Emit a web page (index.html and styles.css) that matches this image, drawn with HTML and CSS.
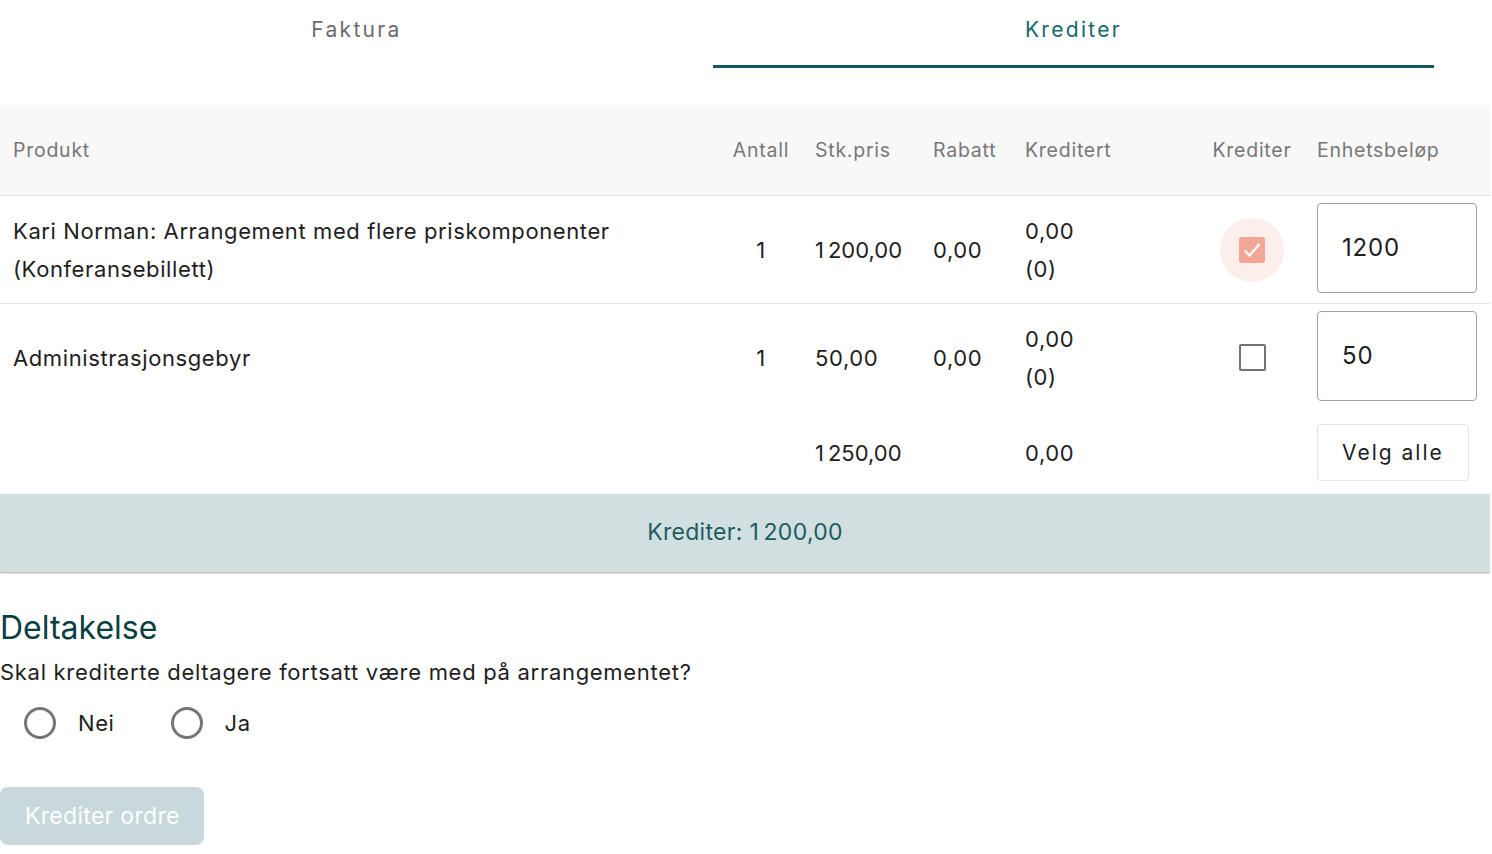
FILE: index.html
```html
<!DOCTYPE html>
<html lang="no">
<head>
<meta charset="utf-8">
<title>Krediter</title>
<link rel="stylesheet" href="styles.css">
</head>
<body>
<div class="tabs">
  <div class="tab tab-first">Faktura</div>
  <div class="tab active">Krediter</div>
</div>

<div class="table">
  <div class="row head">
    <div class="c c-prod">Produkt</div>
    <div class="c c-center">Antall</div>
    <div class="c">Stk.pris</div>
    <div class="c">Rabatt</div>
    <div class="c">Kreditert</div>
    <div class="c c-center">Krediter</div>
    <div class="c">Enhetsbeløp</div>
  </div>
  <div class="row item">
    <div class="c c-prod">Kari Norman: Arrangement med flere priskomponenter (Konferansebillett)</div>
    <div class="c c-center">1</div>
    <div class="c">1&#8239;200,00</div>
    <div class="c">0,00</div>
    <div class="c">0,00<br>(0)</div>
    <div class="c c-center">
      <span class="check-wrap on">
        <span class="box checked">
          <svg class="tick" viewBox="0 0 26 26" width="26" height="26"><path d="M5.5 13.5l5 5L20.5 7" fill="none" stroke="#fff" stroke-width="2.4"/></svg>
        </span>
      </span>
    </div>
    <div class="c"><div class="input">1200</div></div>
  </div>
  <div class="row item last">
    <div class="c c-prod">Administrasjonsgebyr</div>
    <div class="c c-center">1</div>
    <div class="c">50,00</div>
    <div class="c">0,00</div>
    <div class="c">0,00<br>(0)</div>
    <div class="c c-center">
      <span class="check-wrap"><span class="box"></span></span>
    </div>
    <div class="c"><div class="input">50</div></div>
  </div>
  <div class="row total">
    <div class="c c-prod"></div>
    <div class="c c-center"></div>
    <div class="c">1&#8239;250,00</div>
    <div class="c"></div>
    <div class="c">0,00</div>
    <div class="c c-center"></div>
    <div class="c"><button class="select-all">Velg alle</button></div>
  </div>
</div>

<div class="summary">Krediter: 1&#8239;200,00</div>

<section class="participation">
  <h2>Deltakelse</h2>
  <p class="question">Skal krediterte deltagere fortsatt være med på arrangementet?</p>
  <div class="radios">
    <label class="radio"><span class="circle"></span>Nei</label>
    <label class="radio"><span class="circle"></span>Ja</label>
  </div>
  <button class="submit" disabled>Krediter ordre</button>
</section>
</body>
</html>
```

FILE: styles.css
```css
* { box-sizing: border-box; }
html, body { margin: 0; padding: 0; background: #fff; }
body {
  font-family: Inter, "Noto Sans", sans-serif;
  color: #1e1e1e;
  width: 1490px;
  letter-spacing: 0.6px;
}

.tabs {
  display: flex;
  width: 1434px;
  height: 68px;
}
.tab {
  flex: 1;
  text-align: center;
  font-size: 21px;
  letter-spacing: 2.3px;
  color: #6b6b6b;
  padding-top: 17px;
  border-bottom: 3px solid transparent;
}
.tab-first { flex: 0 0 713px; }
.tab.active {
  color: #17686c;
  border-bottom-color: #13585e;
}

.table { margin-top: 37px; }
.row {
  display: grid;
  grid-template-columns: 720px 82px 118px 92px 188px 104px 186px;
  align-items: center;
}
.row.head {
  height: 91px;
  background: #f8f8f8;
  border-bottom: 1px solid #e2e2e2;
  color: #777;
  font-size: 19.5px;
  letter-spacing: 0.75px;
}
.row.item {
  height: 108px;
  border-bottom: 1px solid #e2e2e2;
  font-size: 22px;
  line-height: 38px;
}
.row.item.last { height: 107px; border-bottom: none; }
.row.total {
  height: 83px;
  font-size: 22px;
}
.c { padding-left: 13px; }
.c-prod { padding-right: 90px; }
.c-center { padding-left: 0; text-align: center; display: flex; justify-content: center; align-items: center; }

.check-wrap {
  width: 64px; height: 64px;
  border-radius: 50%;
  display: flex; align-items: center; justify-content: center;
}
.check-wrap.on { background: #fbeeeb; }
.box {
  width: 27px; height: 27px;
  border: 2.5px solid #737373;
  border-radius: 2px;
  display: flex; align-items: center; justify-content: center;
}
.box.checked {
  width: 26px; height: 26px;
  background: #f1a696;
  border: none;
  border-radius: 3px;
}
.tick { display: block; flex: 0 0 26px; }

.input {
  width: 160px;
  height: 90px;
  margin-top: -3px;
  border: 1px solid #a0a0a0;
  border-radius: 4px;
  font-size: 24px;
  padding-left: 24px;
  display: flex;
  align-items: center;
  letter-spacing: 0.8px;
}

.select-all {
  width: 152px;
  height: 57px;
  background: #fff;
  border: 1px solid #e3e3e3;
  border-radius: 4px;
  font-family: inherit;
  font-size: 21px;
  letter-spacing: 2px;
  color: #1e1e1e;
  text-align: left;
  padding-left: 24px;
}

.summary {
  height: 78px;
  background: #d1dfe0;
  color: #1d5c61;
  font-size: 23px;
  letter-spacing: 0.3px;
  display: flex;
  align-items: center;
  justify-content: center;
  padding-bottom: 2px;
  box-shadow: 0 1px 2px rgba(0,0,0,0.35);
}

.participation { padding-top: 36px; }
.participation h2 {
  margin: 0;
  font-weight: 400;
  font-size: 32px;
  line-height: 40px;
  color: #0b3f40;
  letter-spacing: 0;
}
.question {
  margin: 9px 0 0;
  font-size: 22px;
  line-height: 30px;
  color: #1e1e1e;
  letter-spacing: 0.7px;
}
.radios {
  display: flex;
  gap: 56px;
  margin-top: 18px;
  padding-left: 24px;
}
.radio {
  display: flex;
  align-items: center;
  gap: 22px;
  font-size: 22px;
  height: 36px;
}
.circle {
  width: 32px; height: 32px;
  border: 3px solid #757575;
  border-radius: 50%;
}
.submit {
  margin-top: 46px;
  width: 204px;
  height: 58px;
  border: none;
  border-radius: 8px;
  background: #c8d8db;
  color: #fff;
  font-family: inherit;
  font-size: 23px;
  text-align: left;
  padding-left: 25px;
  letter-spacing: 0.3px;
}
```
